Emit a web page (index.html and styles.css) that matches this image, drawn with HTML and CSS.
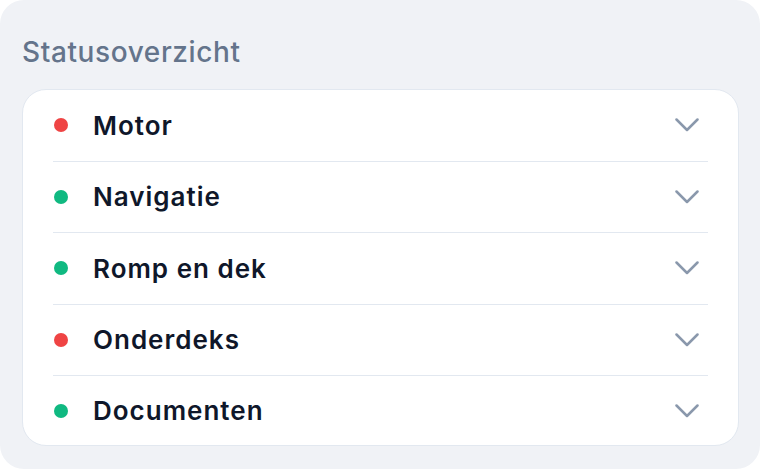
FILE: index.html
```html
<!DOCTYPE html>
<html lang="nl">
<head>
  <meta charset="UTF-8" />
  <meta name="viewport" content="width=device-width, initial-scale=1.0" />
  <title>Statusoverzicht</title>
  <link rel="stylesheet" href="styles.css">
</head>
<body>
  <div class="panel">
    <h2 class="panel-title">Statusoverzicht</h2>

    <ul class="status-list">
      <li class="status-row">
        <span class="dot dot-red"></span>
        <span class="status-name">Motor</span>
        <svg class="chevron" viewBox="0 0 24 14" width="24" height="14"><polyline points="1.5,1.5 12,12 22.5,1.5" /></svg>
      </li>
      <li class="status-row">
        <span class="dot dot-green"></span>
        <span class="status-name">Navigatie</span>
        <svg class="chevron" viewBox="0 0 24 14" width="24" height="14"><polyline points="1.5,1.5 12,12 22.5,1.5" /></svg>
      </li>
      <li class="status-row">
        <span class="dot dot-green"></span>
        <span class="status-name">Romp en dek</span>
        <svg class="chevron" viewBox="0 0 24 14" width="24" height="14"><polyline points="1.5,1.5 12,12 22.5,1.5" /></svg>
      </li>
      <li class="status-row">
        <span class="dot dot-red"></span>
        <span class="status-name">Onderdeks</span>
        <svg class="chevron" viewBox="0 0 24 14" width="24" height="14"><polyline points="1.5,1.5 12,12 22.5,1.5" /></svg>
      </li>
      <li class="status-row">
        <span class="dot dot-green"></span>
        <span class="status-name">Documenten</span>
        <svg class="chevron" viewBox="0 0 24 14" width="24" height="14"><polyline points="1.5,1.5 12,12 22.5,1.5" /></svg>
      </li>
    </ul>
  </div>
</body>
</html>
```

FILE: styles.css
```css
* {
  box-sizing: border-box;
}

html, body {
  margin: 0;
  padding: 0;
  background: #fff;
}

body {
  font-family: Inter, 'Noto Sans', sans-serif;
  color: #0f172a;
}

.panel {
  width: 760px;
  height: 469px;
  background-color: #f0f2f6;
  border-radius: 24px;
  padding: 35px 21px 0 22px;
}

.panel-title {
  margin: 0 0 20px;
  font-size: 28px;
  line-height: 34px;
  font-weight: 500;
  letter-spacing: 0.6px;
  color: #64748b;
}

.status-list {
  list-style: none;
  margin: 0;
  padding: 0 30px;
  background: #fff;
  border: 1px solid #e2e8f0;
  border-radius: 24px;
}

.status-row {
  display: flex;
  align-items: center;
  height: 71.5px;
  border-bottom: 1px solid #e2e8f0;
}

.status-row:last-child {
  border-bottom: none;
  height: 69px;
}

.dot {
  width: 14px;
  height: 14px;
  border-radius: 50%;
  margin-left: 1px;
  flex-shrink: 0;
}

.dot-red {
  background-color: #ef4444;
}

.dot-green {
  background-color: #10b981;
}

.status-name {
  margin-left: 25px;
  flex: 1;
  font-size: 26px;
  font-weight: 600;
  letter-spacing: 1px;
}

.chevron {
  margin-right: 9px;
  fill: none;
  stroke: #8a98ac;
  stroke-width: 2.5;
  stroke-linecap: round;
  stroke-linejoin: round;
}
```
